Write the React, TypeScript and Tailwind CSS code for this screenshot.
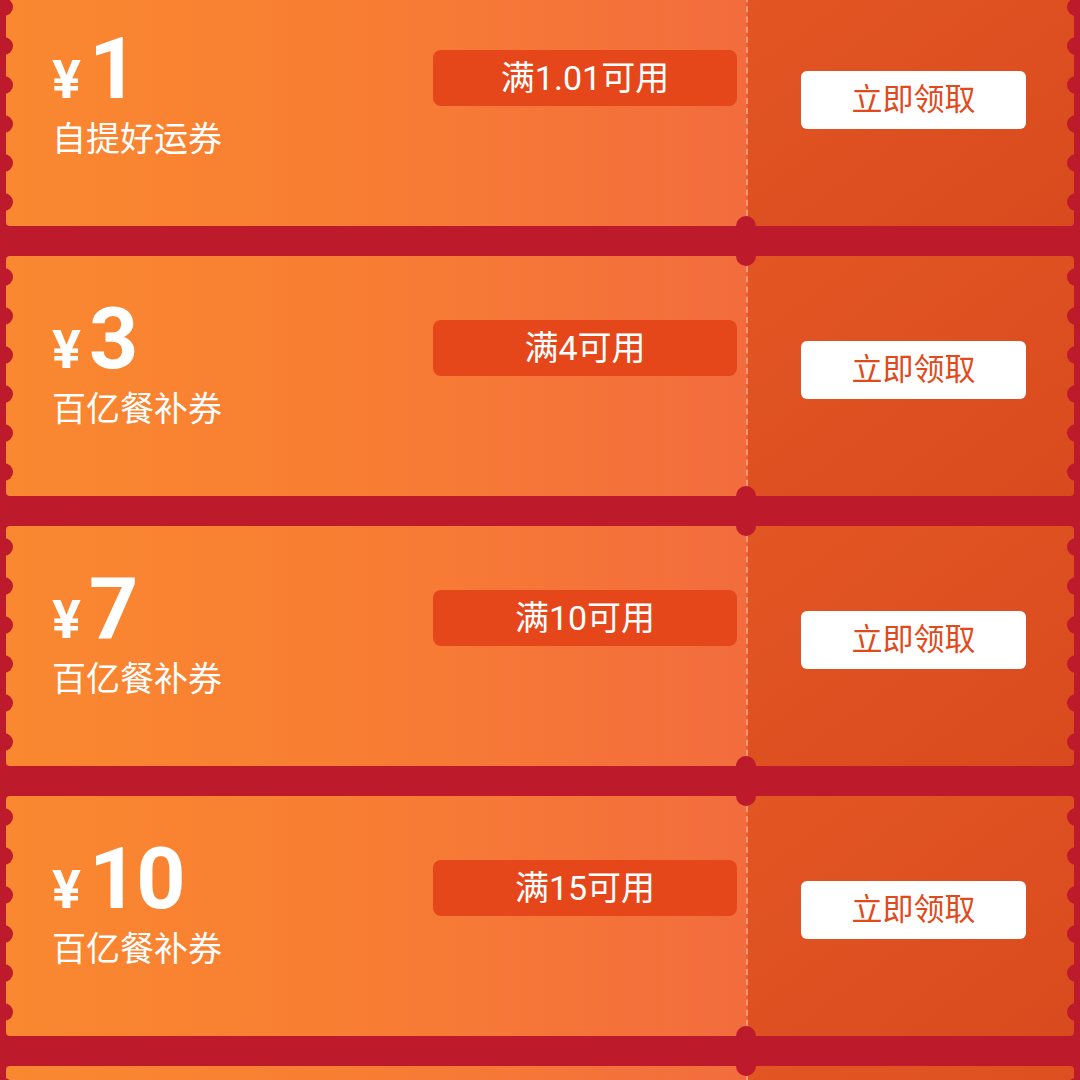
import React from "react";

const coupons = [
  { amount: "1", title: "自提好运券", limit: "满1.01可用" },
  { amount: "3", title: "百亿餐补券", limit: "满4可用" },
  { amount: "7", title: "百亿餐补券", limit: "满10可用" },
  { amount: "10", title: "百亿餐补券", limit: "满15可用" },
];

const font = { fontFamily: '"Roboto", "Noto Sans CJK SC", sans-serif' };

function Scallops({ side }: { side: "left" | "right" }) {
  return (
    <div
      className={
        side === "left"
          ? "absolute left-[-11px] top-0 bottom-0 flex flex-col justify-between pt-[12px] pb-[15px]"
          : "absolute right-[-11px] top-0 bottom-0 flex flex-col justify-between pt-[12px] pb-[15px]"
      }
    >
      {[0, 1, 2, 3, 4, 5].map((i) => (
        <span key={i} className="block h-[18px] w-[18px] rounded-full bg-[#bd1a2c]" />
      ))}
    </div>
  );
}

function Shell({ children, badge, button }: { children?: React.ReactNode; badge?: React.ReactNode; button?: React.ReactNode }) {
  return (
    <div className="relative flex h-[240px] w-[1068px] shrink-0">
      {/* main part */}
      <div className="flex w-[740px] justify-between bg-gradient-to-r from-[#fa8830] via-[#f87d33] to-[#f26c3d] pl-[46px] pr-[9px] rounded-l-[4px]">
        <div className="flex flex-col">{children}</div>
        {badge}
      </div>

      {/* dashed divider */}
      <div className="w-[2px] bg-[#ec5f30]">
        <div className="h-full w-[2px] border-l-2 border-dashed border-[#f7b49a]/70" />
      </div>

      {/* stub */}
      <div className="flex flex-1 bg-gradient-to-br from-[#e35623] to-[#d94a1e] pl-[53px] pt-[85px] rounded-r-[4px]">
        {button}
      </div>

      <Scallops side="left" />
      <Scallops side="right" />

      {/* notches */}
      <span className="absolute left-[730px] top-[-10px] h-[20px] w-[20px] rounded-full bg-[#bd1a2c]" />
      <span className="absolute left-[730px] bottom-[-10px] h-[20px] w-[20px] rounded-full bg-[#bd1a2c]" />
    </div>
  );
}

function Coupon({ amount, title, limit }: { amount: string; title: string; limit: string }) {
  return (
    <Shell
      badge={
        <div className="mt-[64px] flex h-[56px] w-[304px] items-center justify-center rounded-[8px] bg-[#e6471a] text-[34px] text-white">
          {limit}
        </div>
      }
      button={
        <div className="flex h-[58px] w-[225px] items-center justify-center rounded-[6px] bg-white text-[31px] text-[#e14a1b]">
          立即领取
        </div>
      }
    >
      <div className="flex items-baseline pt-[40px] text-white">
        <span className="text-[54px] font-bold leading-none">¥</span>
        <span className="ml-[8px] text-[86px] font-bold leading-none tracking-[-2px]">{amount}</span>
      </div>
      <div className="mt-[10px] text-[34px] leading-none text-white">{title}</div>
    </Shell>
  );
}

export default function App() {
  return (
    <div className="h-[1080px] w-[1080px] overflow-hidden bg-[#bd1a2c]" style={font}>
      <div className="-mt-[14px] flex flex-col gap-[30px] px-[6px]">
        {coupons.map((c, i) => (
          <Coupon key={i} {...c} />
        ))}
        <Shell />
      </div>
    </div>
  );
}
